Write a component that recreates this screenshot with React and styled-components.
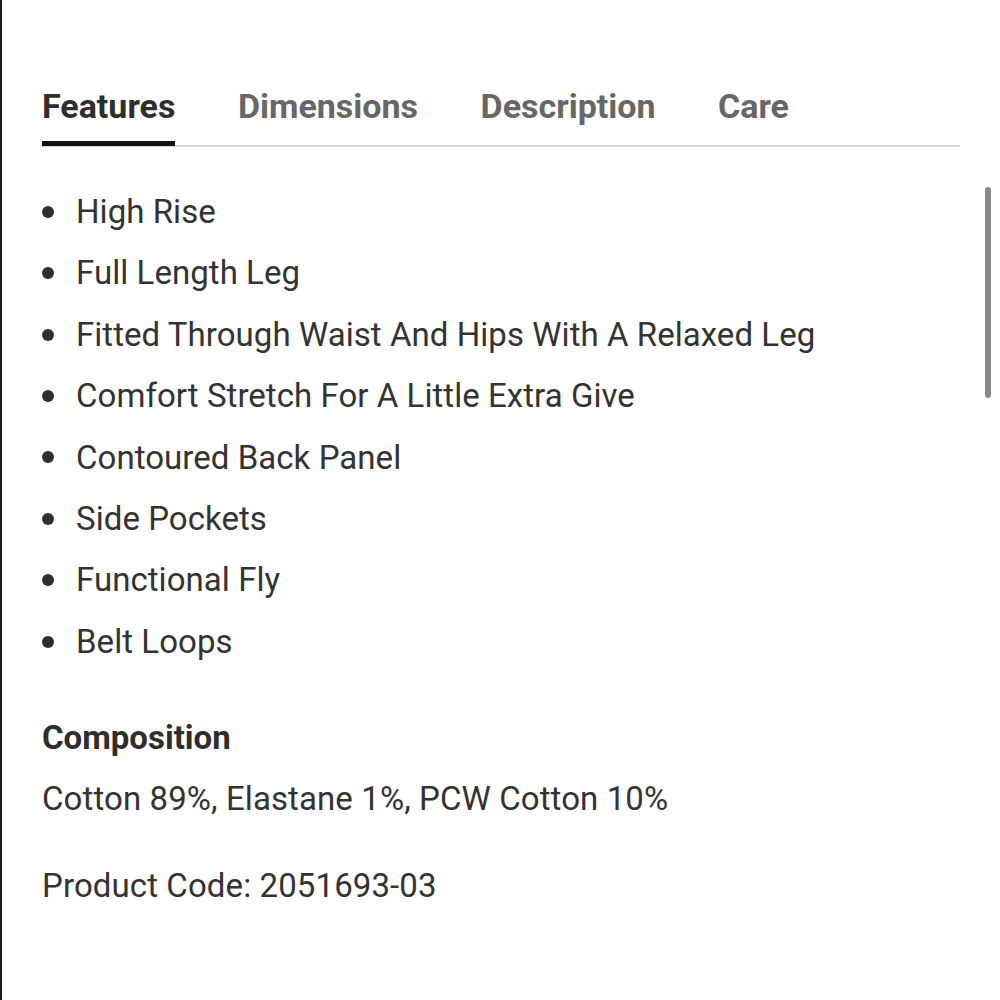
import styled, { createGlobalStyle } from "styled-components";

const GlobalStyle = createGlobalStyle`
  html, body {
    margin: 0;
    padding: 0;
    background: #fff;
  }
  body {
    font-family: Roboto, "Liberation Sans", sans-serif;
    color: #333;
  }
`;

const Page = styled.div`
  position: relative;
  height: 1000px;
  box-sizing: border-box;
  border-left: 2px solid #1e1e1e;
  padding: 86px 40px 0 40px;
  overflow: hidden;
`;

const TabList = styled.div`
  display: flex;
  gap: 62.5px;
  border-bottom: 2px solid #d6d6d6;
`;

const Tab = styled.div`
  font-size: 34px;
  line-height: 40px;
  font-weight: 700;
  color: ${(p) => (p.$active ? "#2e2e2e" : "#676767")};
  padding-bottom: 15px;
  border-bottom: 5px solid ${(p) => (p.$active ? "#111" : "transparent")};
  margin-bottom: -1px;
`;

const List = styled.ul`
  list-style: none;
  margin: 0;
  padding: 34px 0 0 0;
`;

const Item = styled.li`
  display: flex;
  align-items: center;
  font-size: 33px;
  line-height: 61.4px;
  letter-spacing: 0.05px;
  color: #333;

  &::before {
    content: "";
    width: 12px;
    height: 12px;
    border-radius: 50%;
    background: #2f2f2f;
    margin-right: 22px;
    flex-shrink: 0;
  }
`;

const Heading = styled.div`
  margin-top: 46px;
  font-size: 33px;
  line-height: 40px;
  font-weight: 700;
  color: #2e2e2e;
`;

const Text = styled.div`
  margin-top: ${(p) => p.$gap}px;
  font-size: 33px;
  line-height: 40px;
  letter-spacing: 0.1px;
  color: #333;
`;

const Scrollbar = styled.div`
  position: absolute;
  right: 9px;
  top: 187px;
  width: 6px;
  height: 211px;
  border-radius: 3px;
  background: #8a8a8a;
`;

const tabs = ["Features", "Dimensions", "Description", "Care"];

const features = [
  "High Rise",
  "Full Length Leg",
  "Fitted Through Waist And Hips With A Relaxed Leg",
  "Comfort Stretch For A Little Extra Give",
  "Contoured Back Panel",
  "Side Pockets",
  "Functional Fly",
  "Belt Loops",
];

const App = () => {
  return (
    <>
      <GlobalStyle />
      <Page>
        <TabList>
          {tabs.map((t, i) => (
            <Tab key={t} $active={i === 0}>
              {t}
            </Tab>
          ))}
        </TabList>
        <List>
          {features.map((f) => (
            <Item key={f}>{f}</Item>
          ))}
        </List>
        <Heading>Composition</Heading>
        <Text $gap={21}>Cotton 89%, Elastane 1%, PCW Cotton 10%</Text>
        <Text $gap={47}>Product Code: 2051693-03</Text>
        <Scrollbar />
      </Page>
    </>
  );
};

export default App;
